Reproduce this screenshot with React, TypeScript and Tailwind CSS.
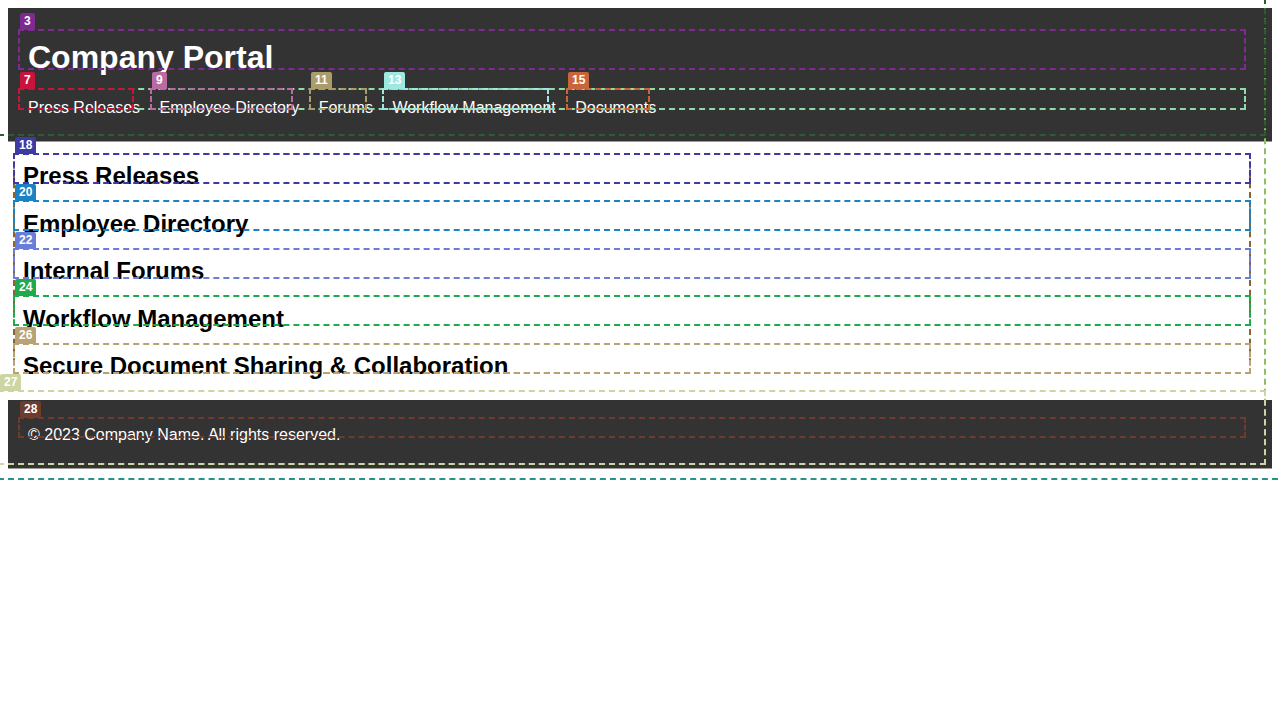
import React from "react";

const links = ["Press Releases", "Employee Directory", "Forums", "Workflow Management", "Documents"];

const sections = [
  "Press Releases",
  "Employee Directory",
  "Internal Forums",
  "Workflow Management",
  "Secure Document Sharing & Collaboration",
];

// inspector outlines drawn over the page
const outlines: { label?: string; box: string; badge?: string }[] = [
  { box: "-left-[2px] -top-[2px] w-[1268px] h-[467px] border-[#8cc060]" },
  { box: "-left-[2px] -top-[2px] w-[1268px] h-[138px] border-[#2a5e2e]" },
  { box: "-left-[2px] top-[478px] w-[1290px] h-[260px] border-[#2b9384]" },
  { label: "3", box: "left-[18px] top-[29px] w-[1228px] h-[41px] border-[#7e2a90]", badge: "bg-[#7e2a90]" },
  { box: "left-[18px] top-[88px] w-[1228px] h-[22px] border-[#8fdca4]" },
  { label: "7", box: "left-[18px] top-[88px] w-[116px] h-[22px] border-[#c8143a]", badge: "bg-[#c8143a]" },
  { label: "9", box: "left-[150px] top-[88px] w-[143px] h-[22px] border-[#b96ba2]", badge: "bg-[#b96ba2]" },
  { label: "11", box: "left-[309px] top-[88px] w-[58px] h-[22px] border-[#ab9c6c]", badge: "bg-[#ab9c6c]" },
  { label: "13", box: "left-[382px] top-[88px] w-[167px] h-[22px] border-[#9de9e1]", badge: "bg-[#9de9e1]" },
  { label: "15", box: "left-[566px] top-[88px] w-[84px] h-[22px] border-[#c9653a]", badge: "bg-[#c9653a]" },
  { box: "left-[13px] top-[153px] w-[1238px] h-[221px] border-[#856530]" },
  { label: "18", box: "left-[13px] top-[153px] w-[1238px] h-[31px] border-[#3d3aa3]", badge: "bg-[#3d3aa3]" },
  { label: "20", box: "left-[13px] top-[200px] w-[1238px] h-[31px] border-[#1b82c4]", badge: "bg-[#1b82c4]" },
  { label: "22", box: "left-[13px] top-[248px] w-[1238px] h-[31px] border-[#6a7ed9]", badge: "bg-[#6a7ed9]" },
  { label: "24", box: "left-[13px] top-[295px] w-[1238px] h-[31px] border-[#1faa4c]", badge: "bg-[#1faa4c]" },
  { label: "26", box: "left-[13px] top-[343px] w-[1238px] h-[31px] border-[#b9a274]", badge: "bg-[#b9a274]" },
  { label: "27", box: "-left-[2px] top-[390px] w-[1268px] h-[75px] border-[#cbd6a2]", badge: "bg-[#cbd6a2]" },
  { label: "28", box: "left-[18px] top-[417px] w-[1228px] h-[21px] border-[#6e3b2f]", badge: "bg-[#6e3b2f]" },
];

function Outline({ label, box, badge }: { label?: string; box: string; badge?: string }) {
  return (
    <div className={`absolute border-2 border-dashed ${box}`}>
      {label && (
        <span
          className={`absolute -top-[18px] left-0 h-[17px] px-[4px] text-[12px] leading-[17px] font-bold text-white rounded-t-[2px] ${badge}`}
        >
          {label}
        </span>
      )}
    </div>
  );
}

export default function App() {
  return (
    <div className="relative w-[1280px] h-[720px] overflow-hidden bg-white p-2 font-['Liberation_Sans',Arial,sans-serif]">
      <header className="bg-[#333333] text-white pl-5 pt-[31px] pb-[24px] border-b border-[#9a9a9a]">
        <h1 className="text-[32px] leading-[37px] font-bold">Company Portal</h1>
        <nav className="mt-[23px] flex gap-[19.5px] text-base leading-[18px]">
          {links.map((l) => (
            <a key={l} href="#" className="text-white">
              {l}
            </a>
          ))}
        </nav>
      </header>

      <main className="pl-[15px] pt-[20px]">
        {sections.map((s) => (
          <section key={s}>
            <h2 className="text-2xl leading-[27.5px] font-bold text-black mb-5">{s}</h2>
          </section>
        ))}
      </main>

      <footer className="bg-[#333333] text-white pl-5 pt-[26px] pb-[24px] border-b border-[#9a9a9a]">
        <p className="text-base leading-[18px]">© 2023 Company Name. All rights reserved.</p>
      </footer>

      <div className="pointer-events-none absolute inset-0">
        {outlines.map((o, i) => (
          <Outline key={i} {...o} />
        ))}
      </div>
    </div>
  );
}
